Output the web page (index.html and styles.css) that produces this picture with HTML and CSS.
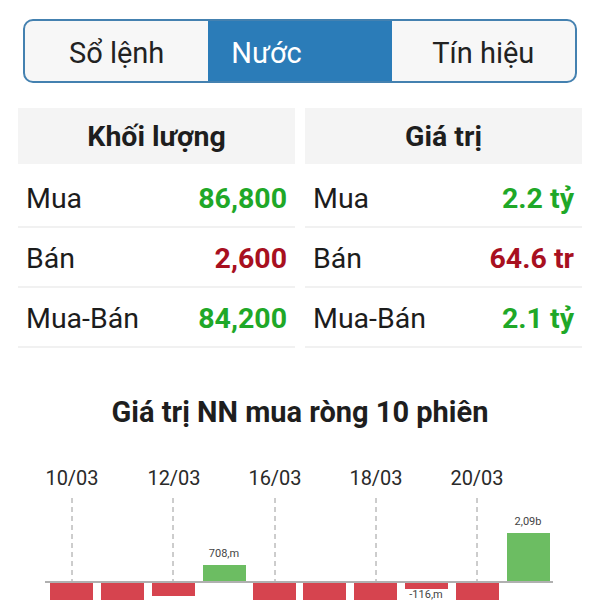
FILE: index.html
```html
<!DOCTYPE html>
<html>
<head>
    <meta charset="utf-8">
    <meta name="viewport" content="width=device-width, initial-scale=1">
    <title>Nước ngoài</title>
    <link rel="stylesheet" href="styles.css">
</head>
<body>
    <div class="tabs">
        <div class="tab">Sổ lệnh</div>
        <div class="tab active">Nước</div>
        <div class="tab">Tín hiệu</div>
    </div>

    <div class="panels">
        <div class="panel">
            <div class="panel-header">Khối lượng</div>
            <div class="row"><span>Mua</span><span class="val up">86,800</span></div>
            <div class="row"><span>Bán</span><span class="val down">2,600</span></div>
            <div class="row"><span>Mua-Bán</span><span class="val up">84,200</span></div>
        </div>
        <div class="panel">
            <div class="panel-header">Giá trị</div>
            <div class="row"><span>Mua</span><span class="val up">2.2 tỷ</span></div>
            <div class="row"><span>Bán</span><span class="val down">64.6 tr</span></div>
            <div class="row"><span>Mua-Bán</span><span class="val up">2.1 tỷ</span></div>
        </div>
    </div>

    <div class="chart">
        <h2 class="chart-title">Giá trị NN mua ròng 10 phiên</h2>
        <!-- x coordinates are page pixels, viewBox starts at the body padding -->
        <svg class="chart-svg" width="564" height="200" viewBox="18 0 564 200">
            <g class="dates">
                <text x="72" y="55">10/03</text>
                <text x="174" y="55">12/03</text>
                <text x="275" y="55">16/03</text>
                <text x="376" y="55">18/03</text>
                <text x="477" y="55">20/03</text>
            </g>
            <g class="grid">
                <line x1="72" y1="68" x2="72" y2="152"></line>
                <line x1="173" y1="68" x2="173" y2="152"></line>
                <line x1="275" y1="68" x2="275" y2="152"></line>
                <line x1="376" y1="68" x2="376" y2="152"></line>
                <line x1="477" y1="68" x2="477" y2="152"></line>
            </g>
            <g class="bars-down">
                <rect x="50" y="153" width="43" height="60"></rect>
                <rect x="101" y="153" width="43" height="60"></rect>
                <rect x="152" y="153" width="43" height="13"></rect>
                <rect x="253" y="153" width="43" height="60"></rect>
                <rect x="303" y="153" width="43" height="60"></rect>
                <rect x="354" y="153" width="43" height="60"></rect>
                <rect x="405" y="153" width="43" height="6"></rect>
                <rect x="456" y="153" width="43" height="60"></rect>
            </g>
            <g class="bars-up">
                <rect x="203" y="135" width="43" height="17"></rect>
                <rect x="507" y="103" width="43" height="49"></rect>
            </g>
            <line class="axis" x1="45" y1="152" x2="553" y2="152"></line>
            <g class="bar-labels">
                <text x="224" y="127">708,m</text>
                <text x="528" y="95">2,09b</text>
                <text x="426" y="168">-116,m</text>
            </g>
        </svg>
    </div>
</body>
</html>
```

FILE: styles.css
```css
body {
    font-family: Roboto, "Noto Sans", sans-serif;
    color: #1c1c1c;
    background: #fff;
    margin: 0;
    padding: 19px 18px 0;
    height: 600px;
    overflow: hidden;
    box-sizing: border-box;
}
.tabs {
    display: grid;
    grid-template-columns: repeat(3, minmax(0, 1fr));
    height: 64px;
    margin: 0 5px;
    border: 2px solid #4481b0;
    border-radius: 10px;
    overflow: hidden;
    box-sizing: border-box;
    background: #f7f7f7;
}
.tab {
    display: flex;
    align-items: center;
    justify-content: center;
    padding-top: 4px;
    font-size: 29px;
    color: #222;
}
.tab.active {
    justify-content: flex-start;
    padding-left: 23px;
    background: #2b7cb8;
    color: #fff;
}
.panels {
    display: flex;
    gap: 10px;
    margin-top: 25px;
}
.panel {
    flex: 1;
}
.panel-header {
    background: #f4f4f4;
    height: 56px;
    line-height: 58px;
    text-align: center;
    font-size: 28.5px;
    font-weight: 700;
    color: #1e1e1e;
    margin-bottom: 4px;
}
.row {
    display: flex;
    justify-content: space-between;
    align-items: center;
    height: 60px;
    padding: 2px 8px 0;
    border-bottom: 2px solid #f1f1f1;
    box-sizing: border-box;
    font-size: 28.5px;
}
.val {
    font-weight: 700;
}
.up {
    color: #1fa828;
}
.down {
    color: #a8101f;
}
.chart {
    margin-top: 46px;
}
.chart-title {
    margin: 0;
    text-align: center;
    font-size: 29px;
    line-height: 36px;
    font-weight: 700;
    color: #1e1e1e;
}
.chart-svg {
    display: block;
}
.dates text {
    font-family: Roboto, sans-serif;
    font-size: 20px;
    fill: #2a2a2a;
    text-anchor: middle;
}
.grid line {
    stroke: #9a9a9a;
    stroke-width: 1;
    stroke-dasharray: 5 4;
}
.axis {
    stroke: #b0b0b0;
    stroke-width: 2;
}
.bars-down rect {
    fill: #d6444f;
}
.bars-up rect {
    fill: #6cbd62;
}
.bar-labels text {
    font-family: Roboto, sans-serif;
    font-size: 11px;
    fill: #444;
    text-anchor: middle;
}
```
